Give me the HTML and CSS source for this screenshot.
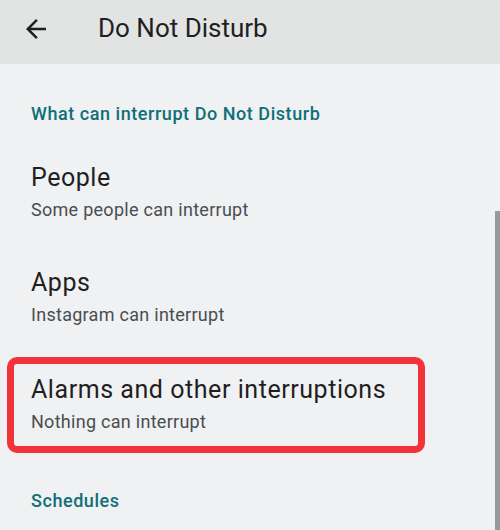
FILE: index.html
```html
<!DOCTYPE html>
<html lang="en">
<head>
<meta charset="utf-8">
<title>Do Not Disturb</title>
<link rel="stylesheet" href="styles.css">
</head>
<body>
<div class="screen">
  <header class="appbar">
    <svg class="back" viewBox="0 0 24 24" width="30" height="30" aria-hidden="true">
      <path d="M20 11H7.83l5.59-5.59L12 4l-8 8 8 8 1.41-1.41L7.83 13H20v-2z" fill="#1f1f1f"/>
    </svg>
    <h1 class="title">Do Not Disturb</h1>
  </header>
  <main class="content">
    <div class="section">What can interrupt Do Not Disturb</div>
    <div class="row">
      <div class="row-title">People</div>
      <div class="row-sub">Some people can interrupt</div>
    </div>
    <div class="row">
      <div class="row-title">Apps</div>
      <div class="row-sub">Instagram can interrupt</div>
    </div>
    <div class="highlight">
      <div class="row-title">Alarms and other interruptions</div>
      <div class="row-sub">Nothing can interrupt</div>
    </div>
    <div class="section schedules">Schedules</div>
  </main>
  <div class="scrollbar"></div>
</div>
</body>
</html>
```
FILE: styles.css
```css
* { box-sizing: border-box; }
html, body { margin: 0; padding: 0; }
body {
  width: 500px;
  height: 530px;
  overflow: hidden;
  background: #eff1f3;
  font-family: Roboto, "Noto Sans", sans-serif;
  color: #1f1f1f;
}
.screen {
  position: relative;
  width: 500px;
  height: 530px;
}
.appbar {
  height: 64px;
  background: #e2e3e3;
  display: flex;
  align-items: flex-start;
  padding: 13px 0 0 21px;
}
.back {
  display: block;
  margin-top: 1px;
  flex: none;
}
.title {
  margin: 0 0 0 47px;
  font-size: 26px;
  font-weight: 400;
  line-height: 30px;
  color: #1f1f1f;
}
.content {
  padding-top: 38px;
}
.section {
  padding-left: 31px;
  font-size: 18px;
  line-height: 24px;
  font-weight: 500;
  letter-spacing: 0.55px;
  color: #0f6f78;
  margin-bottom: 14px;
}
.row {
  padding: 22px 0 23px 31px;
}
.row-title {
  font-size: 25px;
  line-height: 32px;
  letter-spacing: 0.55px;
  color: #1f1f1f;
}
.row-sub {
  margin-top: 4px;
  font-size: 18px;
  line-height: 24px;
  letter-spacing: 0.28px;
  color: #4a4d50;
}
.highlight {
  margin: 7px 75px 0 7px;
  border: 7px solid #f2343a;
  border-radius: 10px;
  padding: 10px 0 12px 17px;
}
.schedules {
  margin-top: 36px;
}
.scrollbar {
  position: absolute;
  right: 0;
  top: 211px;
  width: 5px;
  height: 319px;
  background: #97999b;
}
```
